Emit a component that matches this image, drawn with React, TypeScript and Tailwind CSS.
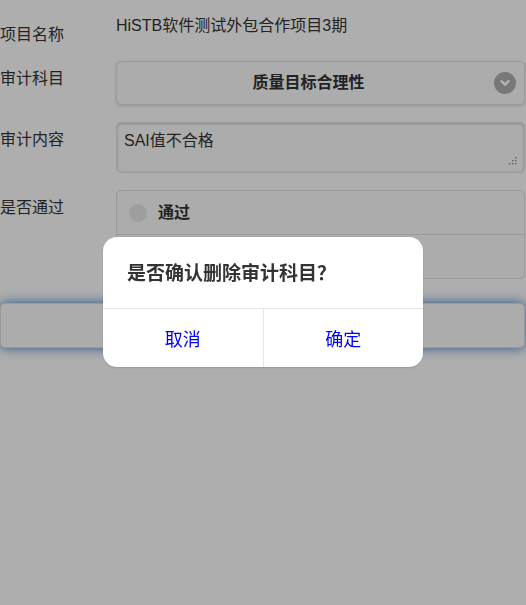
import React from 'react';

const font = { fontFamily: '"Liberation Sans", "Noto Sans CJK SC", sans-serif' };
const cjk = { fontFamily: '"Noto Sans CJK SC", "Liberation Sans", sans-serif' };

const Row = ({ label, labelClass, children }: { label: string; labelClass: string; children: React.ReactNode }) => (
  <div className="flex items-start">
    <div className={`w-[116px] shrink-0 text-[16px] leading-[18px] text-[#333] ${labelClass}`}>{label}</div>
    <div className="flex-1 min-w-0">{children}</div>
  </div>
);

const App = () => {
  return (
    <div className="relative min-h-screen w-full bg-[#f9f9f9] overflow-hidden" style={font}>
      <div className="flex flex-col pr-[1px]">
        <Row label="项目名称" labelClass="pt-[26px]">
          <div className="pt-[17px] h-[61px] text-[16px] leading-[18px] text-[#333]">HiSTB软件测试外包合作项目3期</div>
        </Row>

        <Row label="审计科目" labelClass="pt-[9px]">
          <div className="relative flex h-[44px] items-center justify-center rounded-[5px] border border-[#ddd] bg-[#f6f6f6] pl-4 pr-10 shadow-[0_1px_3px_rgba(0,0,0,0.15)]">
            <span className="text-[16px] font-bold text-[#333]">质量目标合理性</span>
            <span className="absolute right-[8px] top-1/2 flex h-[22px] w-[22px] -translate-y-1/2 items-center justify-center rounded-full bg-black/30">
              <svg width="12" height="12" viewBox="0 0 12 12">
                <path d="M2.5 4.2 L6 7.7 L9.5 4.2" fill="none" stroke="white" strokeWidth="2.4" strokeLinecap="round" strokeLinejoin="round" />
              </svg>
            </span>
          </div>
        </Row>

        <div className="h-[17px]" />

        <Row label="审计内容" labelClass="pt-[9px]">
          <div className="relative h-[51px] rounded-[5px] border border-[#ddd] bg-[#f6f6f6] px-[7px] pt-[9px] text-[16px] leading-[18px] text-[#333] shadow-[inset_0_1px_3px_rgba(0,0,0,0.2)]">
            SAI值不合格
            <svg className="absolute bottom-[7px] right-[7px]" width="8" height="8" viewBox="0 0 8 8">
              <rect x="6" y="0" width="1.4" height="1.4" fill="#888" />
              <rect x="6" y="3" width="1.4" height="1.4" fill="#888" />
              <rect x="3" y="3" width="1.4" height="1.4" fill="#888" />
              <rect x="6" y="6" width="1.4" height="1.4" fill="#888" />
              <rect x="3" y="6" width="1.4" height="1.4" fill="#888" />
              <rect x="0" y="6" width="1.4" height="1.4" fill="#888" />
            </svg>
          </div>
        </Row>

        <div className="h-[17px]" />

        <Row label="是否通过" labelClass="pt-[9px]">
          <div className="rounded-[5px] border border-[#ddd] bg-[#f6f6f6]">
            <div className="flex h-[44px] items-center gap-[11px] border-b border-[#ddd] pl-[12px]">
              <span className="h-[18px] w-[18px] rounded-full bg-[#e3e3e3]" />
              <span className="text-[16px] font-bold text-[#333]">通过</span>
            </div>
            <div className="flex h-[43px] items-center gap-[11px] pl-[12px]">
              <span className="h-[18px] w-[18px] rounded-full bg-[#e3e3e3]" />
            </div>
          </div>
        </Row>

        <div className="h-[24px]" />

        <button className="h-[45px] w-full rounded-[5px] border border-[#ddd] bg-[#f6f6f6] shadow-[0_0_12px_#387bbe]" />
      </div>

      <div className="fixed inset-0 bg-black/30" />

      <div className="fixed left-[103px] top-[237px] w-[320px] overflow-hidden rounded-[14px] bg-white shadow-[0_1px_2px_rgba(0,0,0,0.15)]" style={cjk}>
        <div className="h-[72px] border-b border-[#e6e6e6] pl-[24px] pt-[24px] text-[19px] font-bold leading-[22px] text-[#333]">
          是否确认删除审计科目？
        </div>
        <div className="flex h-[58px]">
          <div className="flex flex-1 items-center justify-center border-r border-[#e6e6e6] pt-[1px] text-[18px] text-[#0000ff]">取消</div>
          <div className="flex flex-1 items-center justify-center pt-[1px] text-[18px] text-[#0000ff]">确定</div>
        </div>
      </div>
    </div>
  );
};

export default App;
